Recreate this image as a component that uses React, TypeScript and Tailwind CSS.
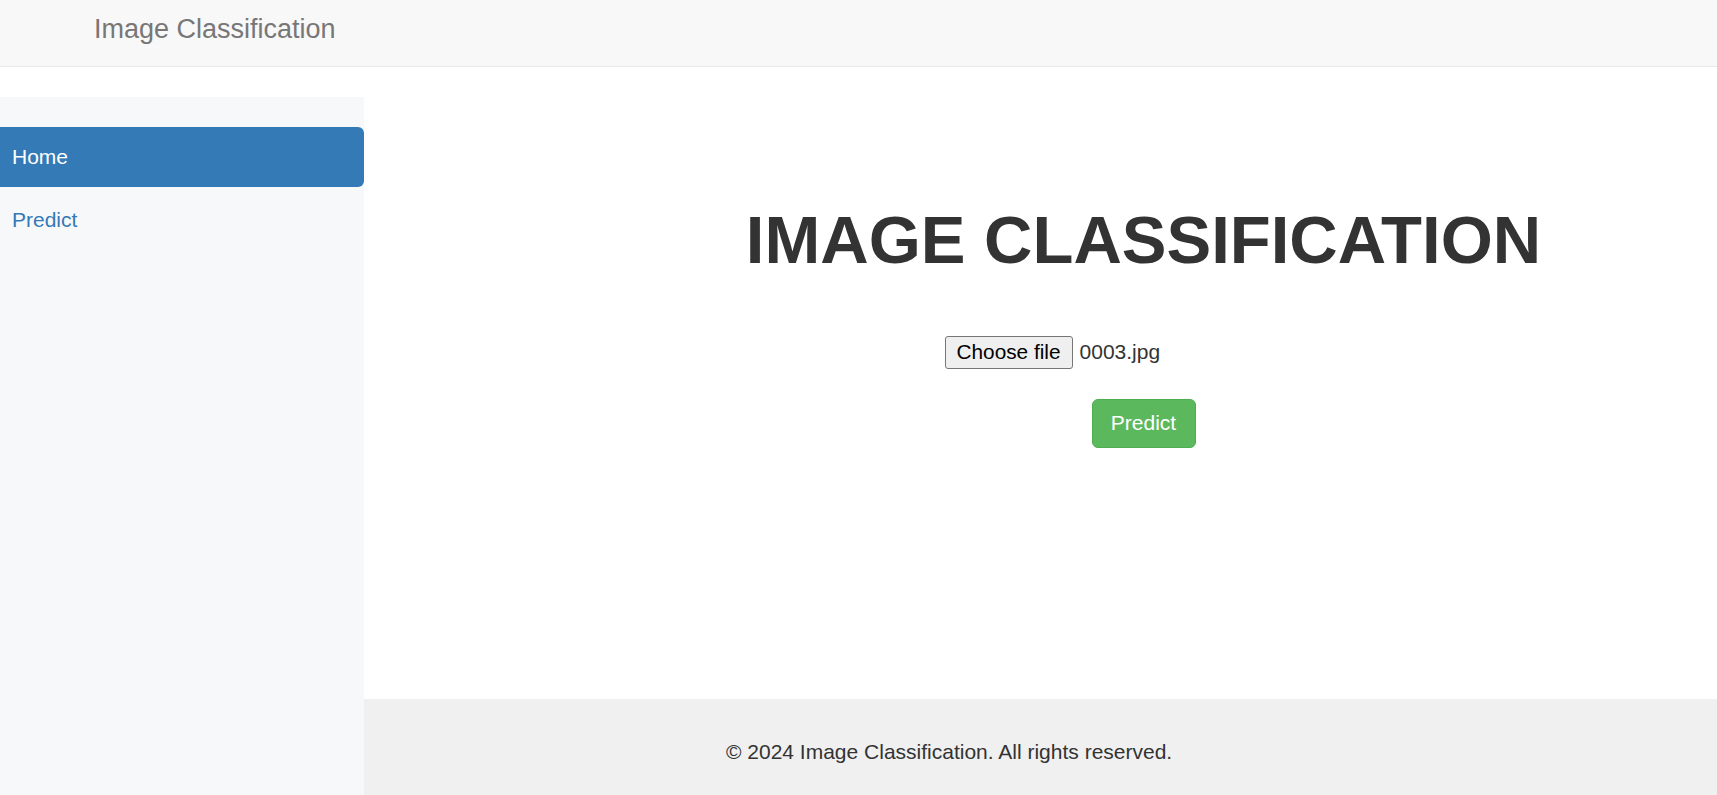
export default function App() {
  return (
    <div className="min-h-screen bg-white font-['Liberation_Sans',Arial,sans-serif] text-[21px] text-[#333]">
      {/* Navbar */}
      <header className="h-[67px] bg-[#f8f8f8] border-b border-[#e7e7e7]">
        <div className="pl-[94px] pt-[14px] text-[27px] leading-[30px] text-[#777]">Image Classification</div>
      </header>

      <div className="flex mt-[30px] h-[698px]">
        {/* Sidebar */}
        <aside className="w-[364px] shrink-0 bg-[#f7f8fa] pt-[30px]">
          <nav className="flex flex-col">
            <a className="h-[60px] flex items-center pl-[12px] bg-[#337ab7] text-white rounded-r-[6px]">Home</a>
            <a className="h-[60px] mt-[3px] flex items-center pl-[12px] text-[#337ab7]">Predict</a>
          </nav>
        </aside>

        <div className="flex-1 flex flex-col">
          {/* Main */}
          <main className="h-[602px] pl-[206px] pt-[106px] flex flex-col items-center">
            <h1 className="text-[67px] leading-[1.1] font-bold text-[#333]">IMAGE CLASSIFICATION</h1>
            <div className="mt-[59px] w-[398px] flex items-center">
              <button className="h-[33px] px-[11px] bg-[#efefef] border border-[#767676] rounded-[3px] text-black text-[20.8px] leading-none">
                Choose file
              </button>
              <span className="ml-[7px] text-[#333]">0003.jpg</span>
            </div>
            <button className="mt-[30px] h-[49px] w-[104px] bg-[#5cb85c] border border-[#4cae4c] rounded-[6px] text-white">
              Predict
            </button>
          </main>

          {/* Footer */}
          <footer className="flex-1 bg-[#f0f0f0] pl-[362px] pt-[38px] leading-[30px] text-[#333]">
            © 2024 Image Classification. All rights reserved.
          </footer>
        </div>
      </div>
    </div>
  );
}
